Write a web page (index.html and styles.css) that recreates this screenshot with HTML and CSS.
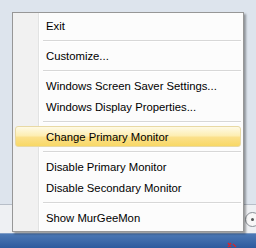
FILE: index.html
```html
<!DOCTYPE html>
<html lang="en">
<head>
  <meta charset="UTF-8">
  <title>MurGee Monitor tray menu</title>
  <link rel="stylesheet" href="styles.css">
</head>
<body>
  <div class="screen">
    <!-- desktop area above the tray -->
    <div class="desktop"></div>

    <!-- bottom panel strip -->
    <div class="strip">
      <span class="round-btn"><span class="round-dot"></span></span>
    </div>

    <!-- taskbar -->
    <div class="taskbar">
      <svg class="tray-icon" width="10" height="6" viewBox="0 0 10 6">
        <path d="M1 1 L4 5 M4 1 L1 5 M6 2 L9 5" stroke="#d8262b" stroke-width="1.4" fill="none"/>
      </svg>
    </div>

    <!-- context menu popup -->
    <div class="menu">
      <div class="menu-item">Exit</div>
      <div class="menu-sep"></div>
      <div class="menu-item">Customize...</div>
      <div class="menu-sep"></div>
      <div class="menu-item">Windows Screen Saver Settings...</div>
      <div class="menu-item">Windows Display Properties...</div>
      <div class="menu-sep"></div>
      <div class="menu-item active">Change Primary Monitor</div>
      <div class="menu-sep"></div>
      <div class="menu-item">Disable Primary Monitor</div>
      <div class="menu-item">Disable Secondary Monitor</div>
      <div class="menu-sep"></div>
      <div class="menu-item">Show MurGeeMon</div>
    </div>
  </div>
</body>
</html>
```

FILE: styles.css
```css
body {
  margin: 0;
  padding: 0;
  font-family: "Liberation Sans", Arial, sans-serif;
}

.screen {
  position: relative;
  width: 256px;
  height: 248px;
  overflow: hidden;
  background-color: #dde4ed;
  display: flex;
  flex-direction: column;
}

.desktop {
  height: 204px;
}

.strip {
  height: 28px;
  border-top: 1px solid #b7bec8;
  background-color: #eef0f3;
  display: flex;
  align-items: center;
  justify-content: flex-end;
}

.round-btn {
  display: flex;
  align-items: center;
  justify-content: center;
  width: 13px;
  height: 13px;
  margin-right: -4px;
  border: 1px solid #8a8f96;
  border-radius: 50%;
  background-color: #f7f7f7;
}

.round-dot {
  width: 3px;
  height: 3px;
  border-radius: 50%;
  background-color: #555;
}

.taskbar {
  flex: 1;
  border-top: 1px solid #7e9cc6;
  background: linear-gradient(to bottom, #4d79b5, #2d5a9e);
  display: flex;
  align-items: flex-end;
  justify-content: flex-end;
}

.tray-icon {
  margin-right: 19px;
}

/* Popup menu */
.menu {
  position: absolute;
  left: 12px;
  top: 12px;
  width: 226px;
  padding: 2px 2px 3px 2px;
  border: 1px solid #979797;
  background: linear-gradient(to right, #f1f1f1 25px, #e2e3e3 25px, #e2e3e3 26px, #ffffff 26px, #ffffff 27px, #fcfcfc 27px);
  box-shadow: 2px 2px 2px rgba(0, 0, 0, 0.35);
}

.menu-item {
  height: 21px;
  line-height: 21px;
  padding-left: 30px;
  font-size: 11.3px;
  color: #000;
  white-space: nowrap;
  border: 1px solid transparent;
  box-sizing: border-box;
}

.menu-item.active {
  border-color: #e8d9a4;
  border-radius: 3px;
  background: linear-gradient(to bottom, #fefae6, #fdeeb3 45%, #fbe08a 55%, #f8d865);
}

.menu-sep {
  height: 9px;
  box-sizing: border-box;
  margin-left: 28px;
  padding-top: 4px;
}

.menu-sep::before {
  content: "";
  display: block;
  border-top: 1px solid #d7d7d7;
  border-bottom: 1px solid #ffffff;
}
```
